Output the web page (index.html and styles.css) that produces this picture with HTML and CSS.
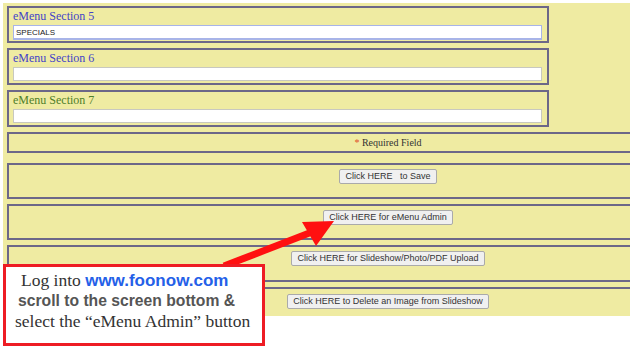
FILE: index.html
```html
<!DOCTYPE html>
<html lang="en">
<head>
    <meta charset="UTF-8">
    <title>eMenu Sections</title>
    <link rel="stylesheet" href="styles.css">
</head>
<body>

    <div class="page">
        <div class="form">
            <!-- menu sections -->
            <div class="section">
                <label class="section-label">eMenu Section 5</label>
                <input type="text" class="section-input focused" value="SPECIALS">
            </div>
            <div class="section">
                <label class="section-label">eMenu Section 6</label>
                <input type="text" class="section-input">
            </div>
            <div class="section">
                <label class="section-label green">eMenu Section 7</label>
                <input type="text" class="section-input">
            </div>

            <div class="row row-required">
                <span class="star">*</span> Required Field
            </div>

            <div class="row row-tall gap-big">
                <button class="btn">Click HERE &nbsp; to Save</button>
            </div>
            <div class="row row-tall">
                <button class="btn">Click HERE for eMenu Admin</button>
            </div>
            <div class="row row-tall tall-plus">
                <button class="btn">Click HERE for Slideshow/Photo/PDF Upload</button>
            </div>
            <div class="row row-last">
                <button class="btn">Click HERE to Delete an Image from Slideshow</button>
            </div>
        </div>
    </div>

    <!-- callout with arrow -->
    <svg class="arrow" width="633" height="347" viewBox="0 0 633 347">
        <line x1="224" y1="266" x2="312" y2="232" stroke="#ff1010" stroke-width="7"/>
        <polygon points="334,221 302,222 316,246" fill="#ff1010"/>
    </svg>

    <div class="callout">
        <div class="callout-line"><span class="serif">Log into</span> <span class="link">www.foonow.com</span></div>
        <div class="callout-line sans">scroll to the screen bottom &amp;</div>
        <div class="callout-line serif">select the “eMenu Admin” button</div>
    </div>

</body>
</html>
```

FILE: styles.css
```css
body {
    margin: 0;
    background-color: #fff;
    font-family: 'Liberation Serif', serif;
    width: 633px;
    height: 347px;
    overflow: hidden;
    position: relative;
}
.page {
    margin: 3px 0 0 3px;
    width: 627px;
    height: 313px;
    background-color: #efeba2;
    overflow: hidden;
}
.form {
    padding: 3px 0 0 4px;
    width: 760px;
}
.section {
    width: 534px;
    height: 33px;
    border: 2px solid #6c6788;
    margin-bottom: 5px;
    padding: 0 0 0 4px;
    box-sizing: content-box;
}
.section-label {
    display: block;
    color: #4343c8;
    font-size: 12px;
    line-height: 14px;
    margin-top: 1px;
}
.section-label.green {
    color: #4f7f2a;
}
.section-input {
    display: block;
    box-sizing: border-box;
    width: 529px;
    height: 14px;
    margin-top: 2px;
    border: 1px solid #c8c8c0;
    background-color: #fff;
    font-family: 'Liberation Sans', sans-serif;
    font-size: 8px;
    padding: 0 2px;
    color: #222;
}
.section-input.focused {
    border-color: #a8b4e8;
    box-shadow: 0 1px 0 #a8b4e8;
}
.row {
    border: 2px solid #6c6788;
    border-right: none;
    margin-bottom: 5px;
    text-align: center;
    box-sizing: border-box;
}
.row-required {
    height: 21px;
    line-height: 17px;
    font-size: 10px;
    color: #333;
}
.star {
    color: #e0502a;
}
.row-tall {
    height: 36px;
    padding-top: 0;
}
.tall-plus {
    height: 37px;
}
.gap-big {
    margin-top: 10px;
    padding-top: 0;
}
.gap-big .btn {
    margin-top: -1px;
}
.row-last {
    height: 40px;
    padding-top: 1px;
    margin-bottom: 0;
}
.btn {
    font-family: 'Liberation Sans', sans-serif;
    font-size: 9px;
    color: #333;
    background-color: #f0f0f0;
    border: 1px solid #aaa;
    border-radius: 2px;
    padding: 2px 5px;
    height: 15px;
    line-height: 9px;
}
.arrow {
    position: absolute;
    left: 0;
    top: 0;
    pointer-events: none;
}
.callout {
    position: absolute;
    left: 3px;
    top: 264px;
    width: 256px;
    height: 73px;
    border: 3px solid #ee1c24;
    background-color: #fff;
    padding-top: 3px;
}
.callout-line {
    font-size: 17.5px;
    line-height: 20px;
    color: #333;
    white-space: nowrap;
}
.callout-line:first-child {
    padding-left: 15px;
    line-height: 21px;
}
.callout-line:nth-child(2) {
    padding-left: 12px;
}
.callout-line:nth-child(3) {
    padding-left: 9px;
}
.serif {
    font-family: 'Liberation Serif', serif;
}
.sans {
    font-family: 'Liberation Sans', sans-serif;
    font-weight: bold;
    font-size: 15.7px;
    color: #555;
}
.link {
    font-family: 'Liberation Sans', sans-serif;
    font-weight: bold;
    color: #2460e8;
    font-size: 17px;
}
```
